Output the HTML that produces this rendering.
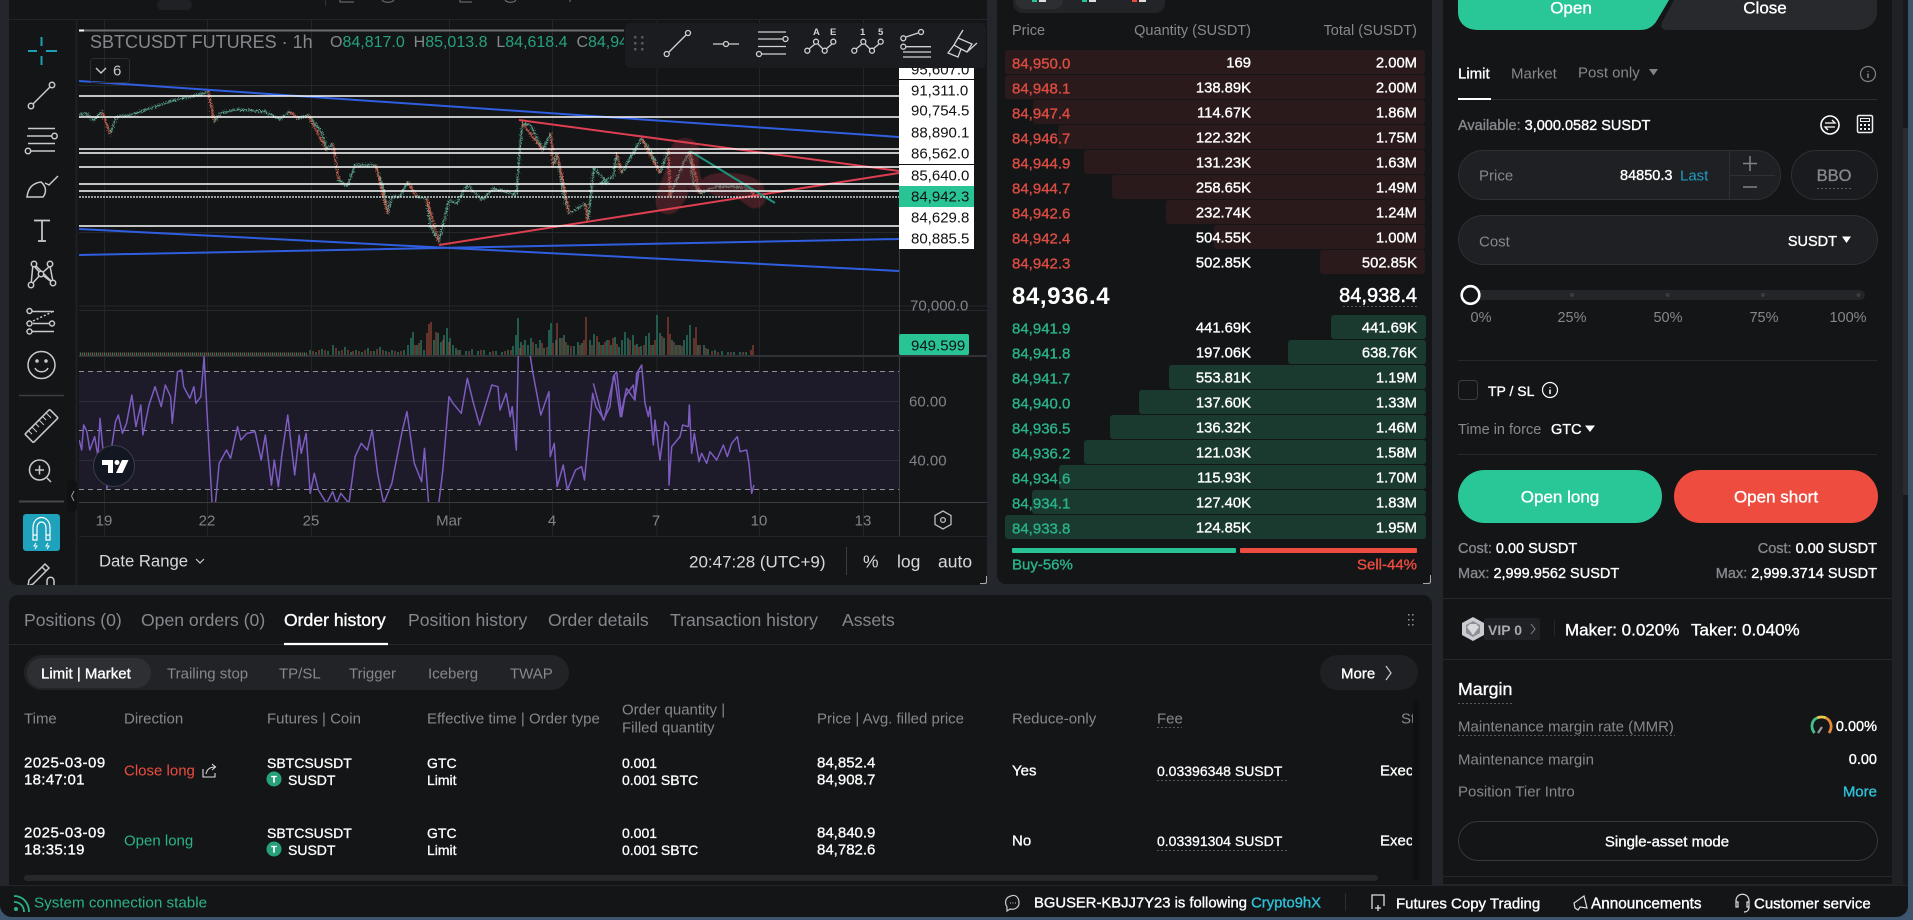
<!DOCTYPE html>
<html><head><meta charset="utf-8"><title>SBTCUSDT Futures</title>
<style>
html,body{margin:0;padding:0;width:1913px;height:920px;overflow:hidden;background:#3d566e;font-family:"Liberation Sans",sans-serif}
#app{position:absolute;left:0;top:0;width:1908px;height:917px;background:#23262a;border-radius:0 0 12px 12px;overflow:hidden}
.p{position:absolute;background:#141517}
.b{position:absolute}
.t{position:absolute;white-space:nowrap;line-height:1;transform:translateY(-50%);font-size:14.5px;color:#fff;margin-top:.5px}
.r{transform:translate(-100%,-50%)}
.c{transform:translate(-50%,-50%)}
.g{color:#85888c}
.m{-webkit-text-stroke:.35px currentColor}
.ax{color:#111;font-size:15px;left:911px}
.tk{color:#808388;font-size:15px;top:520px}
.ask{color:#dc4d42;font-size:15px;left:1012px}
.bid{color:#2ab38a;font-size:15px;left:1012px}
.q{font-size:14.8px;left:1251px}
.tt{font-size:14.8px;left:1417px}
.rb{position:absolute;height:24px;background:#2b1a1b;border-radius:3px}
.gb{position:absolute;height:24px;background:#1a3a30;border-radius:3px}
.tab{font-size:17.6px;color:#85888c;top:620px}
.sub{font-size:15px;color:#85888c;top:673px}
.th{font-size:15px;color:#85888c;top:718px}
.td{font-size:14px;-webkit-text-stroke:.3px #fff}
svg{position:absolute;left:0;top:0;overflow:visible}
</style></head><body>
<div id="app">

<div class="p" style="left:9px;top:0;width:978px;height:585px;border-radius:0 0 9px 9px"></div>
<div class="p" style="left:997px;top:0;width:435px;height:584px;border-radius:0 0 9px 9px"></div>
<div class="p" style="left:1443px;top:0;width:449px;height:884px"></div>
<div class="p" style="left:9px;top:595px;width:1423px;height:290px;border-radius:9px 9px 0 0"></div>
<div class="b" style="left:1892px;top:0;width:11px;height:885px;background:#1f2125"></div>
<div class="b" style="left:1903px;top:0;width:5px;height:128px;background:#18191b"></div>
<div class="b" style="left:1903px;top:128px;width:5px;height:367px;background:#2a2b2f"></div>
<div class="b" style="left:1903px;top:495px;width:5px;height:422px;background:#18191b"></div>

<!-- chart art -->
<svg width="1913" height="920" viewBox="0 0 1913 920">
<defs>
<filter id="jit" x="-5%" y="-5%" width="110%" height="110%"><feTurbulence type="fractalNoise" baseFrequency=".85" numOctaves="2" seed="4"/><feDisplacementMap in="SourceGraphic" scale="7" xChannelSelector="R" yChannelSelector="G"/></filter>
<filter id="soft" x="-10%" y="-10%" width="120%" height="120%"><feGaussianBlur stdDeviation="1.5"/></filter>
<pattern id="vol" width="4" height="10" patternUnits="userSpaceOnUse"><rect x="0" width="1.2" height="10" fill="#2a8068"/><rect x="2" width="1.2" height="10" fill="#8e4335"/></pattern>
<clipPath id="rsi"><rect x="79" y="356" width="820" height="146"/></clipPath>
<clipPath id="main"><rect x="79" y="30" width="820" height="280"/></clipPath>
<clipPath id="pen"><rect x="20" y="555" width="50" height="30"/></clipPath>
</defs>

<!-- frame lines -->
<path d="M9 19.5H987" stroke="#222427" fill="none"/>
<path d="M76.5 20V585" stroke="#1e2023" stroke-width="2" fill="none"/>
<rect x="157" y="0" width="35" height="10" rx="5" fill="#1f2124"/>
<path d="M325.5 0V6" stroke="#303236"/>
<path d="M340 0V2H354M382 0C384 3 392 3 394 0M460 0V2H472M505 0C507 3 514 3 516 0M570 0V2" stroke="#777" fill="none"/>
<!-- grid -->
<path d="M104.5 20V536M207.5 20V536M311.5 20V536M449.5 20V536M552.5 20V536M657 20V536M759.5 20V536M863.5 20V536" stroke="#232528" fill="none"/>
<path d="M79 85.5H899M79 232.5H899M79 306H987M79 310.5H987" stroke="#26282b" fill="none"/>
<path d="M79 30.5H624" stroke="#6b6d70" stroke-width="2" fill="none"/>
<path d="M79 30.5H84" stroke="#fff" stroke-width="2" fill="none"/>
<!-- rsi band -->
<rect x="79" y="371" width="820" height="118" fill="#1d1a29"/>
<path d="M79 401.5H899M79 460.5H899" stroke="#2e2d38" fill="none"/>
<path d="M79 371.5H899M79 430.5H899M79 489.5H899" stroke="#8e8e94" stroke-dasharray="5 4" fill="none"/>
<path d="M79 502.5H987M79 536.5H987" stroke="#3a3c40" fill="none"/>
<path d="M79 536.5H987" stroke="#222427" fill="none"/>
<path d="M899.5 247V536" stroke="#3c3e42" fill="none"/>
<path d="M79 356H987" stroke="#303236" stroke-width="2" fill="none"/>

<!-- volume -->
<rect x="79" y="352.500" width="228" height="3" fill="url(#vol)"/>
<path fill="none" stroke="#2a8068" stroke-width="1.300" d="M310 355V350M316 355V352M322 355V349M328 355V351M333 355V345M339 355V351M345 355V347M351 355V352M356 355V350M362 355V352M368 355V348M374 355V351M380 355V347M386 355V351M392 355V350M398 355V352M404 355V350M408 355V345M411 355V338M413 355V332M417 355V345M421 355V340M424 355V350M434 355V340M438 355V333M441 355V342M444 355V335M447 355V328M450 355V338M453 355V345M456 355V348M460 355V350M466 355V351M472 355V349M478 355V351M484 355V350M490 355V352M496 355V351M502 355V352M508 355V350M513 355V346M516 355V335M518 355V318M521 355V342M525 355V340M528 355V345M531 355V338M536 355V344M540 355V340M544 355V348M549 355V330M551 355V323M556 355V340M560 355V338M564 355V335M568 355V345M574 355V346M578 355V342M582 355V343M590 355V340M594 355V334M599 355V342M603 355V345M607 355V340M611 355V345M615 355V337M619 355V347M622 355V340M625 355V332M628 355V338M633 355V335M637 355V344M641 355V346M646 355V336M649 355V333M653 355V345M657 355V315M660 355V333M664 355V338M672 355V340M676 355V345M680 355V345M684 355V340M687 355V335M690 355V325M698 355V345M704 355V345M708 355V349M715 355V350M722 355V351M728 355V352M734 355V352M740 355V352M746 355V352"/>
<path fill="none" stroke="#8e4335" stroke-width="1.300" d="M313 355V351M319 355V350M325 355V350M336 355V348M342 355V350M348 355V350M353 355V351M359 355V351M365 355V350M371 355V351M377 355V349M383 355V350M389 355V352M395 355V351M401 355V351M415 355V345M419 355V343M427 355V333M429 355V324M431 355V322M436 355V332M443 355V340M449 355V342M458 355V350M469 355V351M481 355V350M493 355V351M505 355V351M511 355V350M520 355V348M523 355V345M533 355V342M538 355V348M542 355V343M547 355V347M553 355V343M557 355V323M562 355V338M566 355V342M571 355V346M580 355V345M584 355V340M586 355V317M592 355V345M597 355V336M601 355V345M605 355V342M609 355V340M613 355V338M617 355V344M630 355V340M635 355V345M639 355V347M644 355V345M651 355V345M655 355V340M662 355V336M668 355V317M670 355V334M674 355V342M678 355V345M682 355V346M694 355V338M696 355V327M700 355V345M706 355V348M712 355V351M718 355V352M731 355V352M743 355V352M751 355V350M753 355V345"/>

<!-- rsi line -->
<g clip-path="url(#rsi)" fill="none" stroke="#7d5cc0" stroke-width="1.5" stroke-linejoin="round">
<polyline vector-effect="non-scaling-stroke" transform="translate(0,300) scale(.40816,.33333)" points="194,420 200,450 205,375 213,395 220,450 232,410 240,470 245,355 250,420 262,565 275,430 283,365 290,345 300,400 310,370 323,285 333,380 345,315 350,405 365,315 380,260 395,320 405,255 418,290 422,370 435,215 445,210 450,260 465,295 475,260 480,310 492,290 500,170 510,400 520,620 527,620 537,490 555,450 565,475 582,380 590,420 605,400 625,395 640,480 650,405 665,555 672,480 682,560 690,470 705,345 722,525 733,405 738,460 750,400 760,580 770,520 780,570 800,610 815,575 825,610 835,580 855,610 870,470 885,430 900,450 912,390 925,520 940,610 960,550 985,395 997,335 1015,490 1033,545 1040,445 1050,610 1075,610 1085,510 1100,290 1110,310 1130,340 1145,235 1160,310 1175,375 1205,255 1220,260 1225,330 1240,280 1250,350 1255,320 1265,450 1270,150 1297,150 1305,215 1325,345 1345,275 1348,470 1358,430 1365,560 1380,495 1390,570 1410,510 1425,500 1432,540 1452,280 1460,320 1480,360 1505,225 1520,350 1535,265 1555,300 1565,215"/>
<polyline vector-effect="non-scaling-stroke" transform="translate(600,300) scale(.33333)" points="-20,250 0,325 10,360 30,320 40,230 50,215 65,350 75,290 100,255 105,300 110,220 125,195 135,310 145,350 150,320 160,435 165,360 180,480 195,365 205,380 207,555 215,440 240,410 248,375 265,380 268,315 275,460 283,400 297,485 305,460 320,490 330,455 350,480 370,435 382,470 395,430 412,410 420,455 440,450 447,490 455,580 462,555"/>
</g>

<!-- price -->
<g clip-path="url(#main)">
<g filter="url(#jit)" fill="none" stroke-linejoin="round">
<polyline vector-effect="non-scaling-stroke" stroke="#5fa58f" stroke-width="1.6" transform="scale(.40816,.33333)" points="194,345 210,340 230,360 250,335 270,400 285,350 320,345 380,320 430,300 500,280 510,270 525,365 540,340 580,328 650,335 685,358 710,335 730,355 755,345 790,400 800,450 815,430 830,540 850,560 870,495 920,495 940,570 950,640 960,590 980,590 1000,545 1020,590 1045,595 1055,680 1075,725 1100,600 1120,610 1145,555 1180,600 1210,565 1265,585 1275,430 1280,370 1300,375 1330,450 1350,400 1355,500 1365,460 1380,580 1395,640 1435,610 1440,665 1455,505 1490,550 1470,550"/>
<polyline vector-effect="non-scaling-stroke" stroke="#5fa58f" stroke-width="1.6" transform="translate(600,0) scale(.33333)" points="0,550 40,530 50,460 65,520 110,440 125,415 150,450 180,520 205,450 210,590 250,490 270,455 280,550 300,580 350,560 400,560 450,565 465,590"/>
<path vector-effect="non-scaling-stroke" stroke="#c8604f" stroke-width="1.7" transform="scale(.40816,.33333)" d="M250 335L270 400M510 270L525 365M710 335L730 355M755 345L800 450M815 430L830 540M920 495L950 640M1000 545L1020 590M1045 595L1075 725M1280 370L1330 450M1350 400L1355 500M1365 460L1395 640M1435 610L1440 665"/>
<path vector-effect="non-scaling-stroke" stroke="#c8604f" stroke-width="1.7" transform="translate(600,0) scale(.33333)" d="M125 415L180 520M205 450L210 590M270 455L300 580M450 565L465 590M50 460L65 520"/>
</g>
<!-- red blobs -->
<g opacity=".32" fill="#a8303f" filter="url(#soft)" transform="translate(600,0) scale(.33333)">
<path d="M170 590a35 35 0 0 0 70 30c20-20 30-40 20-60 20 20 50 30 60 10 20 20 50 30 80 10 20 20 40 40 60 45a35 35 0 0 0 35-50c0-30-40-50-90-55-50-5-80 0-100 20-10-30-10-70-5-90a40 40 0 0 0-90 20c-10 30-20 60-30 80-5 20-10 30-10 40z"/>
</g>
<!-- trend lines -->
<g fill="none" stroke-width="2">
<path d="M79 81L899 137M79 229L899 271M79 255L899 239" stroke="#2f5fe0"/>
<path d="M519 120L899 171M439 245L899 173" stroke="#dc3f50"/>
<path d="M690 151L775 203" stroke="#1f8f7a" stroke-width="2"/>
</g>
<!-- white lines -->
<path d="M79 96H899M79 117H899M79 149H899M79 153H899M79 167H899M79 184H899M79 191H899M79 226H899" stroke="#fff" stroke-width="1.6" fill="none"/>
<path d="M79 197H899" stroke="#e8f4ef" stroke-width="1.3" stroke-dasharray="2 1" fill="none"/>
</g>

<!-- TV logo -->
<circle cx="114" cy="466" r="20.5" fill="#131722" stroke="#3a3d48" stroke-width="1"/>
<path d="M102 460H113V473H108V465H102ZM122 460H128.5L122.5 473H116Z" fill="#fff"/><circle cx="117" cy="462.5" r="2.5" fill="#fff"/>

<!-- left tools -->
<g fill="none" stroke="#c8cacc" stroke-width="1.5">
<path d="M41.5 37V46M41.5 56V65M28 51H37M46 51H57" stroke="#1f9fb5" stroke-width="2"/>
<path d="M33 104L50 87"/><circle cx="31" cy="106" r="2.7"/><circle cx="52" cy="85" r="2.7"/>
<path d="M28 128.5H55M27 136H52M28 143.5H55M31 151H55"/><circle cx="54.5" cy="136" r="2.7"/><circle cx="28" cy="151" r="2.7"/>
<path d="M27 197C28 188 33 183 41 182C46 186 47 192 43 197ZM45 183L49 185L58 176"/>
<path d="M34 220.5H50M42 220V241M38 241H46" stroke-width="1.7"/>
<path d="M33 264L31 285M34 266L41 274L31 285M50 266L41 274L53 283M50 266L53 282M34 264L53 283"/><circle cx="34" cy="264" r="2.7" fill="#141517"/><circle cx="50" cy="264" r="2.7" fill="#141517"/><circle cx="41" cy="274" r="2.7" fill="#141517"/><circle cx="31" cy="285" r="2.7" fill="#141517"/><circle cx="53" cy="283" r="2.7" fill="#141517"/>
<path d="M32 311.5H54M33 323.5H49M32 331.5H54"/><path d="M33 321L52 312" stroke-dasharray="2 2"/><circle cx="29.5" cy="311" r="2.5"/><circle cx="29.5" cy="323.5" r="2.5"/><circle cx="52" cy="323.5" r="2.5"/><circle cx="29.5" cy="331.5" r="2.5"/>
<circle cx="41.5" cy="365" r="13.5"/><path d="M35 368C37 373 46 373 48 368"/><circle cx="37" cy="361" r="1" fill="#c8cacc"/><circle cx="46" cy="361" r="1" fill="#c8cacc"/>
<path d="M19 395.5H64" stroke="#3c3e42"/>
<g transform="rotate(-45 41.5 426)"><rect x="24" y="420" width="35" height="12" rx="1"/><path d="M29 420V425M34 420V427M39 420V425M44 420V427M49 420V425M54 420V427" stroke-width="1"/></g>
<circle cx="39.5" cy="470" r="10"/><path d="M47 478L51 482M39.5 465.5V474.5M35 470H44"/>
<path d="M19 501.5H64" stroke="#45474b" stroke-width="2"/>
</g>
<rect x="23" y="514" width="37" height="37" rx="3" fill="#1fa3bc"/>
<g fill="none" stroke="#fff" stroke-width="1.2"><path d="M33 540V528C33 514 50 514 50 528V540H46V528C46 520 37 520 37 528V540ZM33 535H37M46 535H50"/><path d="M36 543L34 546L37 546L35 549M48 543L46 546L49 546L47 549" stroke-width="1"/></g>
<g clip-path="url(#pen)" fill="none" stroke="#c8cacc" stroke-width="1.5"><path d="M29 580L45 564L49 568L33 584L28 586ZM42 567L46 571M47 586V581C47 576 54 576 54 581V586"/></g>
<rect x="67" y="480" width="10" height="32" rx="4" fill="#101113"/><path d="M74 491L71.5 496L74 501" stroke="#999" fill="none"/>

<!-- floating toolbar -->
<rect x="625" y="23" width="361" height="45" rx="6" fill="#1b1c1f"/>
<g fill="#55575a"><rect x="634" y="36" width="2.5" height="2.5"/><rect x="641" y="36" width="2.5" height="2.5"/><rect x="634" y="42" width="2.5" height="2.5"/><rect x="641" y="42" width="2.5" height="2.5"/><rect x="634" y="48" width="2.5" height="2.5"/><rect x="641" y="48" width="2.5" height="2.5"/></g>
<g fill="none" stroke="#cfd1d3" stroke-width="1.3">
<path d="M669 52L686 35"/><circle cx="666.7" cy="54" r="2.5"/><circle cx="688" cy="33" r="2.5"/>
<path d="M713 44H723.5M728.5 44H739"/><circle cx="726" cy="44" r="2.5"/>
<path d="M758 32H786M758 39H783M758 46.5H786M762 54H786"/><circle cx="785.5" cy="39" r="2.5"/><circle cx="759" cy="54" r="2.5"/>
<path d="M809 49L815 44M818 44L823 49M826 49L832 44"/><circle cx="807.3" cy="50.7" r="2.5"/><circle cx="816" cy="41.7" r="2.5"/><circle cx="824.7" cy="50.7" r="2.5"/><circle cx="833.3" cy="41.7" r="2.5"/>
<path d="M856 49L862 44M865 44L870 49M873 49L879 44"/><circle cx="854.3" cy="50.7" r="2.5"/><circle cx="863.3" cy="41.7" r="2.5"/><circle cx="872" cy="50.7" r="2.5"/><circle cx="880.7" cy="41.7" r="2.5"/>
<path d="M906 37L918 33"/><circle cx="903.3" cy="38.3" r="2.5"/><circle cx="921" cy="32" r="2.5"/><circle cx="903.3" cy="46.7" r="2.5"/><path d="M906 46.7H931M903 52H931M903 57H931"/>
<path d="M948 53L954 45L961 49L958 57ZM954 45L958 38L972 44L967 52L961 49M958 38L963 30M967 52L977 43"/>
</g>
<g font-family="Liberation Sans" font-size="9.5" font-weight="700" fill="#cfd1d3"><text x="813" y="35">A</text><text x="830" y="35">E</text><text x="860" y="35">1</text><text x="878" y="35">5</text></g>

<!-- white price axis -->
<rect x="899" y="68" width="75" height="181" fill="#fff"/>
<path d="M899 79.5H974M899 164.5H974" stroke="#111" fill="none"/>
<rect x="899" y="186" width="75" height="21" fill="#29c496"/>
<rect x="899" y="334" width="70" height="21" rx="2" fill="#29c496"/>
<path d="M935 515.5L943 511L951 515.5V524.5L943 529L935 524.5Z" fill="none" stroke="#bbb" stroke-width="1.3"/><circle cx="943" cy="520" r="2.4" fill="none" stroke="#bbb" stroke-width="1.3"/>
<path d="M980 583.5H985C986 583.5 986.5 583 986.5 582V576" stroke="#aaa" fill="none"/>
<path d="M846.5 547V575" stroke="#3a3c40"/>
<path d="M196 559L200 563L204 559" stroke="#ccc" fill="none" stroke-width="1.2"/>
<path d="M96 68L101 73L106 68" stroke="#ccc" fill="none" stroke-width="1.4"/>
<rect x="90.5" y="58.5" width="39" height="24" rx="3" fill="none" stroke="#2a2c30"/>

<!-- order book top pill -->
<rect x="1013" y="-10" width="152" height="23" rx="10" fill="#222428"/>
<rect x="1015" y="-10" width="48" height="19" rx="9" fill="#2c2e32"/>
<path d="M1032 0H1037V2H1032Z" fill="#29c496"/><path d="M1039 0H1046V2H1039Z" fill="#ddd"/><path d="M1082 0H1087V2H1082Z" fill="#29c496"/><path d="M1089 0H1096V2H1089Z" fill="#ddd"/><path d="M1132 0H1137V2H1132Z" fill="#e84e40"/><path d="M1139 0H1146V2H1139Z" fill="#ddd"/>
<path d="M1343 306.500H1417" stroke="#555" stroke-dasharray="2 2"/>
<rect x="1012" y="548" width="224" height="5" rx="1" fill="#29c496"/><rect x="1240" y="548" width="177" height="5" rx="1" fill="#ee4c40"/>
<path d="M1423 583.500H1428C1430 583.500 1430.500 583 1430.500 581V575" stroke="#aaa" fill="none"/>

<!-- right panel shapes -->
<path d="M1458 0V12C1458 23 1466 30 1478 30H1640C1648 30 1652 27 1656 22L1669 0Z" fill="#29c698"/>
<path d="M1674 0L1662 22C1660 27 1662 30 1668 30H1856C1868 30 1877 23 1877 12V0Z" fill="#27292d"/>
<path d="M1458 99.500H1877" stroke="#2a2c30" fill="none"/><path d="M1458 99H1491" stroke="#fff" stroke-width="2" fill="none"/>
<circle cx="1868" cy="74" r="7.500" fill="none" stroke="#808388" stroke-width="1.200"/><path d="M1868 71V71.800M1868 73.500V78" stroke="#808388" stroke-width="1.500" fill="none"/>
<path d="M1649 69H1658L1653.500 75.500Z" fill="#808388"/>
<circle cx="1830" cy="125" r="9" fill="none" stroke="#fff" stroke-width="1.600"/><path d="M1825 123H1835L1832 120M1835 127H1825L1828 130" stroke="#fff" stroke-width="1.300" fill="none"/>
<rect x="1857.500" y="115.500" width="15" height="17" rx="1.500" fill="none" stroke="#eee" stroke-width="1.500"/><rect x="1860.500" y="118.500" width="9" height="3" fill="none" stroke="#eee"/><g fill="#eee"><rect x="1860" y="124" width="2" height="2"/><rect x="1864" y="124" width="2" height="2"/><rect x="1868" y="124" width="2" height="2"/><rect x="1860" y="128" width="2" height="2"/><rect x="1864" y="128" width="2" height="2"/><rect x="1868" y="128" width="2" height="2"/></g>
<rect x="1458.500" y="150.500" width="322" height="49" rx="24.500" fill="#1e2023" stroke="#2e3034"/>
<path d="M1729.500 151V199M1730 175.500H1775" stroke="#2e3034" fill="none"/>
<path d="M1750 156V171M1743 163.500H1757" stroke="#808388" stroke-width="1.500" fill="none"/><path d="M1743 187H1757" stroke="#808388" stroke-width="1.500" fill="none"/>
<rect x="1791.500" y="150.500" width="86" height="49" rx="24.500" fill="#1a1b1e" stroke="#2e3034"/>
<path d="M1817 188.500H1852" stroke="#5c5e62" stroke-dasharray="2 2" fill="none"/>
<rect x="1458.500" y="215.500" width="419" height="49" rx="24.500" fill="#1e2023" stroke="#2e3034"/>
<path d="M1842 236.500H1851L1846.500 243Z" fill="#fff"/>
<rect x="1470" y="290" width="395" height="10" rx="5" fill="#232529"/>
<g fill="#3a3c40"><circle cx="1572" cy="295" r="2"/><circle cx="1667.500" cy="295" r="2"/><circle cx="1763" cy="295" r="2"/><circle cx="1858.500" cy="295" r="2"/></g>
<circle cx="1470.500" cy="295" r="8.800" fill="#141517" stroke="#fff" stroke-width="2.600"/>
<path d="M1458 360.500H1877M1458 454.500H1877" stroke="#26282b" fill="none"/>
<rect x="1458.500" y="380.500" width="19" height="19" rx="3.500" fill="none" stroke="#3a3c40"/>
<circle cx="1550" cy="390" r="7.500" fill="none" stroke="#fff" stroke-width="1.200"/><path d="M1550 387V387.800M1550 389.500V394" stroke="#fff" stroke-width="1.500" fill="none"/>
<path d="M1585 425.500H1595L1590 432Z" fill="#fff"/>
<rect x="1458" y="470" width="204" height="53" rx="26.500" fill="#29c698"/>
<rect x="1674" y="470" width="204" height="53" rx="26.500" fill="#ef4c40"/>
<path d="M1443 598.500H1892M1443 659.500H1892M1443 876.500H1892" stroke="#26282b" fill="none"/>
<rect x="1484" y="618" width="56" height="22" rx="2" fill="#1f2124"/>
<polygon points="1473,617 1484,623 1484,635 1473,641 1462,635 1462,623" fill="#c9ccd0"/><polygon points="1473,621 1480,625 1480,633 1473,637 1466,633 1466,625" fill="#8d9094"/><polygon points="1467,627 1470,624 1476,624 1479,627 1473,635" fill="#d8dadc"/>
<path d="M1531 624L1535 629L1531 634" stroke="#808388" fill="none"/>
<path d="M1554.500 620V636" stroke="#26282b"/>
<path d="M1458 703.500H1514M1458 735.500H1675" stroke="#55575a" stroke-dasharray="2 2" fill="none"/>
<g fill="none" stroke-width="2.800" stroke-linecap="butt"><path d="M1814.500 733C1810 727 1812 720 1817 718" stroke="#45c08a"/><path d="M1817 718C1820 716.500 1824 716.800 1826 718" stroke="#e8c94a"/><path d="M1826 718C1831 720.500 1833 727 1829 733" stroke="#e88a3c"/></g>
<path d="M1818 733L1822 727" stroke="#9a9da0" stroke-width="2.200"/>
<rect x="1458.500" y="821.500" width="419" height="39" rx="19.500" fill="none" stroke="#36383c"/>

<!-- bottom panel shapes -->
<path d="M9 644.500H1432" stroke="#25272b" fill="none"/><path d="M284 644H388" stroke="#fff" stroke-width="2.200" fill="none"/>
<g fill="#85888c"><rect x="1408" y="614" width="1.600" height="1.600"/><rect x="1412" y="614" width="1.600" height="1.600"/><rect x="1408" y="619" width="1.600" height="1.600"/><rect x="1412" y="619" width="1.600" height="1.600"/><rect x="1408" y="624" width="1.600" height="1.600"/><rect x="1412" y="624" width="1.600" height="1.600"/></g>
<rect x="24" y="655" width="545" height="35" rx="17.500" fill="#212327"/>
<rect x="27" y="658" width="124" height="30" rx="15" fill="#2d2f33"/>
<rect x="1320" y="655" width="98" height="35" rx="17.500" fill="#1e2023"/>
<path d="M1386 666L1391 673L1386 680" stroke="#ccc" fill="none" stroke-width="1.200"/>
<rect x="1413" y="700" width="6" height="180" fill="#0f1012"/>
<path d="M1157 727.500H1182M1157 780.500H1288M1157 850.500H1288" stroke="#55575a" stroke-dasharray="2 2" fill="none"/>
<path d="M203 769V777H215V773M206 774C207 769 210 767 215 767M212 764L215.500 767L212 770" stroke="#ddd" fill="none" stroke-width="1.100"/>
<circle cx="274" cy="779" r="7.500" fill="#26a17b"/><circle cx="274" cy="849" r="7.500" fill="#26a17b"/>
<rect x="24" y="875" width="1354" height="6" rx="3" fill="#26282c"/>
</svg>

<!-- footer -->
<div class="p" style="left:0;top:885px;width:1908px;height:32px;border-top:1px solid #232528;box-sizing:border-box"></div>
<svg width="1913" height="920" viewBox="0 0 1913 920">
<circle cx="16" cy="909" r="2" fill="#2ab38a"/><path d="M14 902C20 902 24 906 24 912M14 896C23 896 29 903 29 912" stroke="#2ab38a" stroke-width="1.800" fill="none"/>
<path d="M1011 896C1016 894 1019 898 1019 903C1019 908 1014 910 1010 909L1007 911V907C1004 902 1006 897 1011 896Z" stroke="#ccc" fill="none" stroke-width="1.200"/><path d="M1010 903H1010.800M1012.500 903H1013.300M1015 903H1015.800" stroke="#ccc" stroke-width="1.200"/>
<path d="M1345.500 893V911" stroke="#2a2c30"/>
<path d="M1372 909V895H1384V906M1378 905V911M1375 908H1381" stroke="#ddd" fill="none" stroke-width="1.300"/>
<path d="M1574 903L1584 896L1587 908L1580 907L1578 910L1575 908Z" stroke="#ddd" fill="none" stroke-width="1.200"/>
<path d="M1736 907V901C1736 892 1749 892 1749 901V907M1736 902H1738V907H1736ZM1747 902H1749V907H1747ZM1749 907C1749 911 1746 912 1744 912" stroke="#ddd" fill="none" stroke-width="1.200"/>
</svg>

<!-- chart text -->
<div class="t" style="left:90px;top:41px;font-size:18px;color:#85888c">SBTCUSDT FUTURES · 1h</div>
<div style="position:absolute;left:330px;top:30px;width:294px;height:24px;overflow:hidden">
<div class="t" style="left:0;top:12px;font-size:16px;color:#85888c">O<span style="color:#26a17f">84,817.0</span>&nbsp;&nbsp;H<span style="color:#26a17f">85,013.8</span>&nbsp;&nbsp;L<span style="color:#26a17f">84,618.4</span>&nbsp;&nbsp;C<span style="color:#26a17f">84,942.3</span></div>
</div>
<div class="t" style="left:113px;top:70px;font-size:15px;color:#c8cacc">6</div>
<div style="position:absolute;left:899px;top:68px;width:75px;height:12px;overflow:hidden"><div class="t ax" style="left:12px;top:1px">95,607.0</div></div>
<div class="t ax" style="top:90px">91,311.0</div>
<div class="t ax" style="top:110px">90,754.5</div>
<div class="t ax" style="top:132px">88,890.1</div>
<div class="t ax" style="top:153px">86,562.0</div>
<div class="t ax" style="top:175px">85,640.0</div>
<div class="t ax" style="top:196px">84,942.3</div>
<div class="t ax" style="top:217px">84,629.8</div>
<div class="t ax" style="top:238px">80,885.5</div>
<div class="t" style="left:910px;top:305px;font-size:15px;color:#808388">70,000.0</div>
<div class="t ax" style="top:345px">949.599</div>
<div class="t" style="left:909px;top:401px;font-size:15px;color:#808388">60.00</div>
<div class="t" style="left:909px;top:460px;font-size:15px;color:#808388">40.00</div>
<div class="t tk c" style="left:104px">19</div><div class="t tk c" style="left:207px">22</div><div class="t tk c" style="left:311px">25</div><div class="t tk c" style="left:449px">Mar</div><div class="t tk c" style="left:552px">4</div><div class="t tk c" style="left:656px">7</div><div class="t tk c" style="left:759px">10</div><div class="t tk c" style="left:863px">13</div>
<div class="t" style="left:99px;top:561px;font-size:16.700px;color:#d6d9dc">Date Range</div>
<div class="t" style="left:689px;top:561px;font-size:17px;color:#d6d9dc">20:47:28 (UTC+9)</div>
<div class="t" style="left:863px;top:561px;font-size:17.500px;color:#d6d9dc">%</div>
<div class="t" style="left:897px;top:561px;font-size:17.500px;color:#d6d9dc">log</div>
<div class="t" style="left:938px;top:561px;font-size:17.500px;color:#d6d9dc">auto</div>

<!-- order book -->
<div class="t g" style="left:1012px;top:30px">Price</div>
<div class="t g r" style="left:1251px;top:30px">Quantity (SUSDT)</div>
<div class="t g r" style="left:1417px;top:30px">Total (SUSDT)</div>
<div class="rb" style="left:1005px;top:50px;width:420px"></div><div class="rb" style="left:1005px;top:75px;width:420px"></div><div class="rb" style="left:1033px;top:100px;width:392px"></div><div class="rb" style="left:1058px;top:125px;width:367px"></div><div class="rb" style="left:1084px;top:150px;width:341px"></div><div class="rb" style="left:1112px;top:175px;width:313px"></div><div class="rb" style="left:1166px;top:200px;width:259px"></div><div class="rb" style="left:1214px;top:225px;width:211px"></div><div class="rb" style="left:1320px;top:250px;width:105px"></div>
<div class="gb" style="left:1331px;top:315px;width:95px"></div><div class="gb" style="left:1288px;top:340px;width:138px"></div><div class="gb" style="left:1169px;top:365px;width:257px"></div><div class="gb" style="left:1139px;top:390px;width:287px"></div><div class="gb" style="left:1110px;top:415px;width:316px"></div><div class="gb" style="left:1084px;top:440px;width:342px"></div><div class="gb" style="left:1059px;top:465px;width:367px"></div><div class="gb" style="left:1032px;top:490px;width:394px"></div><div class="gb" style="left:1005px;top:515px;width:421px"></div>

<div class="t ask m" style="top:63px">84,950.0</div><div class="t q r m" style="top:63px">169</div><div class="t tt r m" style="top:63px">2.00M</div>
<div class="t ask m" style="top:88px">84,948.1</div><div class="t q r m" style="top:88px">138.89K</div><div class="t tt r m" style="top:88px">2.00M</div>
<div class="t ask m" style="top:113px">84,947.4</div><div class="t q r m" style="top:113px">114.67K</div><div class="t tt r m" style="top:113px">1.86M</div>
<div class="t ask m" style="top:138px">84,946.7</div><div class="t q r m" style="top:138px">122.32K</div><div class="t tt r m" style="top:138px">1.75M</div>
<div class="t ask m" style="top:163px">84,944.9</div><div class="t q r m" style="top:163px">131.23K</div><div class="t tt r m" style="top:163px">1.63M</div>
<div class="t ask m" style="top:188px">84,944.7</div><div class="t q r m" style="top:188px">258.65K</div><div class="t tt r m" style="top:188px">1.49M</div>
<div class="t ask m" style="top:213px">84,942.6</div><div class="t q r m" style="top:213px">232.74K</div><div class="t tt r m" style="top:213px">1.24M</div>
<div class="t ask m" style="top:238px">84,942.4</div><div class="t q r m" style="top:238px">504.55K</div><div class="t tt r m" style="top:238px">1.00M</div>
<div class="t ask m" style="top:263px">84,942.3</div><div class="t q r m" style="top:263px">502.85K</div><div class="t tt r m" style="top:263px">502.85K</div>
<div class="t" style="left:1012px;top:296px;font-size:24px;font-weight:700;letter-spacing:.6px">84,936.4</div>
<div class="t r" style="left:1417px;top:295px;font-size:20px;-webkit-text-stroke:.5px #fff">84,938.4</div>
<div class="t bid m" style="top:328px">84,941.9</div><div class="t q r m" style="top:328px">441.69K</div><div class="t tt r m" style="top:328px">441.69K</div>
<div class="t bid m" style="top:353px">84,941.8</div><div class="t q r m" style="top:353px">197.06K</div><div class="t tt r m" style="top:353px">638.76K</div>
<div class="t bid m" style="top:378px">84,941.7</div><div class="t q r m" style="top:378px">553.81K</div><div class="t tt r m" style="top:378px">1.19M</div>
<div class="t bid m" style="top:403px">84,940.0</div><div class="t q r m" style="top:403px">137.60K</div><div class="t tt r m" style="top:403px">1.33M</div>
<div class="t bid m" style="top:428px">84,936.5</div><div class="t q r m" style="top:428px">136.32K</div><div class="t tt r m" style="top:428px">1.46M</div>
<div class="t bid m" style="top:453px">84,936.2</div><div class="t q r m" style="top:453px">121.03K</div><div class="t tt r m" style="top:453px">1.58M</div>
<div class="t bid m" style="top:478px">84,934.6</div><div class="t q r m" style="top:478px">115.93K</div><div class="t tt r m" style="top:478px">1.70M</div>
<div class="t bid m" style="top:503px">84,934.1</div><div class="t q r m" style="top:503px">127.40K</div><div class="t tt r m" style="top:503px">1.83M</div>
<div class="t bid m" style="top:528px">84,933.8</div><div class="t q r m" style="top:528px">124.85K</div><div class="t tt r m" style="top:528px">1.95M</div>
<div class="t m" style="left:1012px;top:564px;font-size:15px;color:#2ab38a">Buy-56%</div>
<div class="t r m" style="left:1417px;top:564px;font-size:15px;color:#ee4c40">Sell-44%</div>

<!-- right panel text -->
<div class="t c m" style="left:1571px;top:7px;font-size:17px">Open</div>
<div class="t c m" style="left:1765px;top:7px;font-size:17px">Close</div>
<div class="t m" style="left:1458px;top:73px;font-size:15px">Limit</div>
<div class="t g" style="left:1511px;top:73px;font-size:15px">Market</div>
<div class="t g" style="left:1578px;top:72px;font-size:15px">Post only</div>
<div class="t m" style="left:1458px;top:125px;font-size:14.500px"><span style="color:#85888c">Available:</span> 3,000.0582 SUSDT</div>
<div class="t g" style="left:1479px;top:175px;font-size:15px">Price</div>
<div class="t m" style="left:1620px;top:175px;font-size:14.500px">84850.3</div>
<div class="t" style="left:1680px;top:175px;font-size:15px;color:#1f9cc0">Last</div>
<div class="t c g m" style="left:1834px;top:175px;font-size:16.500px">BBO</div>
<div class="t g" style="left:1479px;top:241px;font-size:15px">Cost</div>
<div class="t r m" style="left:1837px;top:241px;font-size:14.500px">SUSDT</div>
<div class="t c g" style="left:1481px;top:317px">0%</div><div class="t c g" style="left:1572px;top:317px">25%</div><div class="t c g" style="left:1668px;top:317px">50%</div><div class="t c g" style="left:1764px;top:317px">75%</div><div class="t c g" style="left:1848px;top:317px">100%</div>
<div class="t m" style="left:1488px;top:390px;font-size:14px">TP / SL</div>
<div class="t g" style="left:1458px;top:429px">Time in force</div>
<div class="t m" style="left:1551px;top:429px">GTC</div>
<div class="t c m" style="left:1560px;top:496px;font-size:17px">Open long</div>
<div class="t c m" style="left:1776px;top:496px;font-size:17px">Open short</div>
<div class="t m" style="left:1458px;top:548px"><span style="color:#85888c">Cost:</span> 0.00 SUSDT</div>
<div class="t m" style="left:1458px;top:573px"><span style="color:#85888c">Max:</span> 2,999.9562 SUSDT</div>
<div class="t r m" style="left:1877px;top:548px"><span style="color:#85888c">Cost:</span> 0.00 SUSDT</div>
<div class="t r m" style="left:1877px;top:573px"><span style="color:#85888c">Max:</span> 2,999.3714 SUSDT</div>
<div class="t" style="left:1488px;top:629px;font-size:14px;font-weight:700;color:#a8abae">VIP 0</div>
<div class="t m" style="left:1565px;top:629px;font-size:17px">Maker: 0.020%</div>
<div class="t m" style="left:1691px;top:629px;font-size:17px">Taker: 0.040%</div>
<div class="t m" style="left:1458px;top:689px;font-size:17.800px">Margin</div>
<div class="t g" style="left:1458px;top:726px;font-size:15px">Maintenance margin rate (MMR)</div>
<div class="t r m" style="left:1877px;top:726px;font-size:14.500px">0.00%</div>
<div class="t g" style="left:1458px;top:759px;font-size:15px">Maintenance margin</div>
<div class="t r m" style="left:1877px;top:759px;font-size:14.500px">0.00</div>
<div class="t g" style="left:1458px;top:791px;font-size:15px">Position Tier Intro</div>
<div class="t r m" style="left:1877px;top:791px;font-size:15px;color:#2fc0d8">More</div>
<div class="t c m" style="left:1667px;top:841px;font-size:15px">Single-asset mode</div>

<!-- bottom panel text -->
<div class="t tab" style="left:24px">Positions (0)</div>
<div class="t tab" style="left:141px">Open orders (0)</div>
<div class="t tab m" style="left:284px;color:#fff">Order history</div>
<div class="t tab" style="left:408px">Position history</div>
<div class="t tab" style="left:548px">Order details</div>
<div class="t tab" style="left:670px">Transaction history</div>
<div class="t tab" style="left:842px">Assets</div>
<div class="t sub m" style="left:41px;color:#fff">Limit&nbsp;|&nbsp;Market</div>
<div class="t sub" style="left:167px">Trailing stop</div>
<div class="t sub" style="left:279px">TP/SL</div>
<div class="t sub" style="left:349px">Trigger</div>
<div class="t sub" style="left:428px">Iceberg</div>
<div class="t sub" style="left:510px">TWAP</div>
<div class="t sub m" style="left:1341px;color:#fff">More</div>
<div class="t th" style="left:24px">Time</div>
<div class="t th" style="left:124px">Direction</div>
<div class="t th" style="left:267px">Futures | Coin</div>
<div class="t th" style="left:427px">Effective time | Order type</div>
<div class="t th" style="left:622px;top:709px">Order quantity |</div>
<div class="t th" style="left:622px;top:727px">Filled quantity</div>
<div class="t th" style="left:817px">Price | Avg. filled price</div>
<div class="t th" style="left:1012px">Reduce-only</div>
<div class="t th" style="left:1157px">Fee</div>
<div style="position:absolute;left:1401px;top:708px;width:12px;height:20px;overflow:hidden"><div class="t th" style="left:0;top:10px">Status</div></div>

<div class="t td" style="left:24px;top:762px;font-size:15px;letter-spacing:.5px">2025-03-09</div>
<div class="t td" style="left:24px;top:779px;font-size:15px;letter-spacing:.3px">18:47:01</div>
<div class="t" style="left:124px;top:770px;font-size:15px;color:#ee4c40">Close long</div>
<div class="t td" style="left:267px;top:762px">SBTCSUSDT</div>
<div class="t td c" style="left:274px;top:779px;font-size:9px;font-weight:700">T</div>
<div class="t td" style="left:288px;top:779px">SUSDT</div>
<div class="t td" style="left:427px;top:762px">GTC</div>
<div class="t td" style="left:427px;top:779px">Limit</div>
<div class="t td" style="left:622px;top:762px">0.001</div>
<div class="t td" style="left:622px;top:779px">0.001 SBTC</div>
<div class="t td" style="left:817px;top:762px;font-size:15px">84,852.4</div>
<div class="t td" style="left:817px;top:779px;font-size:15px">84,908.7</div>
<div class="t td" style="left:1012px;top:770px;font-size:15px">Yes</div>
<div class="t td" style="left:1157px;top:770px">0.03396348 SUSDT</div>
<div style="position:absolute;left:1380px;top:760px;width:32px;height:20px;overflow:hidden"><div class="t td" style="left:0;top:10px;font-size:15px">Executed</div></div>

<div class="t td" style="left:24px;top:832px;font-size:15px;letter-spacing:.5px">2025-03-09</div>
<div class="t td" style="left:24px;top:849px;font-size:15px;letter-spacing:.3px">18:35:19</div>
<div class="t" style="left:124px;top:840px;font-size:15px;color:#2ab38a">Open long</div>
<div class="t td" style="left:267px;top:832px">SBTCSUSDT</div>
<div class="t td c" style="left:274px;top:849px;font-size:9px;font-weight:700">T</div>
<div class="t td" style="left:288px;top:849px">SUSDT</div>
<div class="t td" style="left:427px;top:832px">GTC</div>
<div class="t td" style="left:427px;top:849px">Limit</div>
<div class="t td" style="left:622px;top:832px">0.001</div>
<div class="t td" style="left:622px;top:849px">0.001 SBTC</div>
<div class="t td" style="left:817px;top:832px;font-size:15px">84,840.9</div>
<div class="t td" style="left:817px;top:849px;font-size:15px">84,782.6</div>
<div class="t td" style="left:1012px;top:840px;font-size:15px">No</div>
<div class="t td" style="left:1157px;top:840px">0.03391304 SUSDT</div>
<div style="position:absolute;left:1380px;top:830px;width:32px;height:20px;overflow:hidden"><div class="t td" style="left:0;top:10px;font-size:15px">Executed</div></div>

<!-- footer text -->
<div class="t" style="left:34px;top:902px;font-size:15.200px;color:#2ab38a">System connection stable</div>
<div class="t m" style="left:1034px;top:903px;font-size:14.800px">BGUSER-KBJJ7Y23 is following <span style="color:#2fc0d8">Crypto9hX</span></div>
<div class="t m" style="left:1396px;top:903px;font-size:15px">Futures Copy Trading</div>
<div class="t m" style="left:1591px;top:903px;font-size:15.300px">Announcements</div>
<div class="t m" style="left:1754px;top:903px;font-size:15px">Customer service</div>
</div>
</body></html>
